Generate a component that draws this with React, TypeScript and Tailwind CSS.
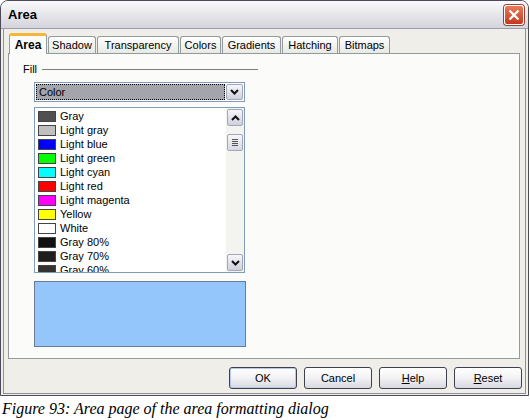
import React from 'react'

const UI = "font-['Liberation_Sans',Arial,sans-serif]"

const TABS = [
  { label: 'Area', w: 'w-[38px]', active: true },
  { label: 'Shadow', w: 'w-[48px]' },
  { label: 'Transparency', w: 'w-[82px]' },
  { label: 'Colors', w: 'w-[41px]' },
  { label: 'Gradients', w: 'w-[59px]' },
  { label: 'Hatching', w: 'w-[56px]' },
  { label: 'Bitmaps', w: 'w-[51px]' },
]

const COLORS = [
  { name: 'Gray', c: 'bg-[#505050]' },
  { name: 'Light gray', c: 'bg-[#c0c0c0]' },
  { name: 'Light blue', c: 'bg-[#0000ff]' },
  { name: 'Light green', c: 'bg-[#00ff00]' },
  { name: 'Light cyan', c: 'bg-[#00ffff]' },
  { name: 'Light red', c: 'bg-[#ff0000]' },
  { name: 'Light magenta', c: 'bg-[#ff00ff]' },
  { name: 'Yellow', c: 'bg-[#ffff00]' },
  { name: 'White', c: 'bg-[#ffffff]' },
  { name: 'Gray 80%', c: 'bg-[#111111]' },
  { name: 'Gray 70%', c: 'bg-[#1f1f1f]' },
  { name: 'Gray 60%', c: 'bg-[#333333]' },
]

function Chevron({ up }: { up?: boolean }) {
  return (
    <svg width="9" height="6" viewBox="0 0 9 6" aria-hidden="true">
      <path
        d={up ? 'M1 5 L4.5 1.5 L8 5' : 'M1 1 L4.5 4.5 L8 1'}
        fill="none" stroke="#111" strokeWidth="2"
      />
    </svg>
  )
}

function ScrollBtn({ up }: { up?: boolean }) {
  return (
    <div className="w-[16px] h-[17px] rounded-[2px] border border-[#a2a6bc] bg-gradient-to-b from-[#f6f6fa] to-[#cfd0dc] flex items-center justify-center">
      <Chevron up={up} />
    </div>
  )
}

function DlgButton({ children, def }: { children: React.ReactNode; def?: boolean }) {
  return (
    <button
      className={`w-[68px] h-[22px] rounded-[3px] border border-[#3e4250] text-[11px] text-black
        bg-gradient-to-b from-[#ffffff] via-[#f2f2f4] to-[#d8d8e0]
        ${def ? 'shadow-[inset_0_0_0_1px_#b8c8e8]' : ''}`}
    >
      {children}
    </button>
  )
}

export default function App() {
  return (
    <div className={`w-[530px] h-[420px] bg-white ${UI} text-[11px] text-black`}>
      {/* Window */}
      <div className="w-[529px] h-[396px] flex flex-col border border-[#4a4a58] rounded-t-[8px] overflow-hidden bg-[#efeee8]">
        {/* Title bar */}
        <div className="h-[28px] shrink-0 flex items-center justify-between pl-[7px] pr-[4px] bg-gradient-to-b from-[#fbfbfc] via-[#e6e6ea] to-[#d4d4dc] border-b border-[#9c9cac]">
          <span className="text-[13px] font-bold">Area</span>
          <div className="w-[20px] h-[20px] rounded-[3px] border border-white bg-gradient-to-b from-[#e87a5a] to-[#c4361c] flex items-center justify-center shadow-[0_0_0_1px_#a04030]">
            <svg width="12" height="12" viewBox="0 0 12 12" aria-hidden="true">
              <path d="M1.5 1.5 L10.5 10.5 M10.5 1.5 L1.5 10.5" stroke="white" strokeWidth="2.2" />
            </svg>
          </div>
        </div>

        {/* Body */}
        <div className="flex-1 px-[2px] pb-px">
          <div className="h-full border-x border-b border-[#8e8e98] flex flex-col">
            {/* Tabs */}
            <div className="h-[25px] shrink-0 flex items-end gap-px pl-[5px] relative z-10 -mb-px">
              {TABS.map(t =>
                t.active ? (
                  <div
                    key={t.label}
                    className={`${t.w} h-[21px] bg-[#fbfbf9] border-x border-[#919b9c] border-t-[3px] border-t-[#f6b63c] rounded-t-[3px] flex items-center justify-center font-bold text-[12px]`}
                  >
                    {t.label}
                  </div>
                ) : (
                  <div
                    key={t.label}
                    className={`${t.w} h-[17px] mb-px bg-gradient-to-b from-[#ffffff] to-[#e8e8e4] border border-b-0 border-[#919b9c] rounded-t-[3px] flex items-center justify-center`}
                  >
                    {t.label}
                  </div>
                )
              )}
            </div>

            {/* Tab page */}
            <div className="ml-[4px] w-[512px] h-[306px] shrink-0 border border-[#919b9c] bg-[#fbfbf9] pl-[14px] pt-[9px]">
              <div className="w-[235px] h-[13px] flex items-center">
                <span>Fill</span>
                <div className="flex-1 ml-[5px] h-px bg-[#7d7d7d]" />
              </div>

              <div className="ml-[11px]">
                {/* Dropdown */}
                <div className="mt-[6px] w-[211px] h-[20px] border border-[#7f9db9] bg-white p-px flex">
                  <div className="flex-1 bg-[#a4a4ac] border border-dotted border-black flex items-center pl-[2px]">
                    Color
                  </div>
                  <div className="w-[17px] ml-px rounded-[2px] border border-[#a2a6bc] bg-gradient-to-b from-[#f6f6fa] to-[#cfd0dc] flex items-center justify-center">
                    <Chevron />
                  </div>
                </div>

                {/* Colour list */}
                <div className="mt-[5px] w-[211px] h-[166px] border border-[#7f9db9] bg-white flex">
                  <div className="flex-1 overflow-hidden pt-px">
                    {COLORS.map(c => (
                      <div key={c.name} className="h-[14px] flex items-center">
                        <span className={`ml-[3px] w-[18px] h-[11px] border border-[#444] ${c.c}`} />
                        <span className="ml-[4px] leading-none">{c.name}</span>
                      </div>
                    ))}
                  </div>
                  <div className="w-[18px] bg-[#f3f3ef] flex flex-col py-px pr-px items-end">
                    <ScrollBtn up />
                    <div className="mt-[8px] w-[16px] h-[17px] rounded-[2px] border border-[#a2a6bc] bg-gradient-to-b from-[#f6f6fa] to-[#d8d8e2] flex flex-col items-center justify-center gap-px">
                      <span className="w-[6px] h-px bg-[#555]" />
                      <span className="w-[6px] h-px bg-[#555]" />
                      <span className="w-[6px] h-px bg-[#555]" />
                      <span className="w-[6px] h-px bg-[#555]" />
                    </div>
                    <div className="flex-1" />
                    <ScrollBtn />
                  </div>
                </div>

                {/* Preview */}
                <div className="mt-[8px] w-[212px] h-[66px] border border-[#6b7b94] bg-[#94c6fc]" />
              </div>
            </div>

            {/* Buttons */}
            <div className="mt-[8px] flex justify-end gap-[7px] pr-[3px]">
              <DlgButton def>OK</DlgButton>
              <DlgButton>Cancel</DlgButton>
              <DlgButton><u>H</u>elp</DlgButton>
              <DlgButton><u>R</u>eset</DlgButton>
            </div>
          </div>
        </div>
      </div>

      {/* Caption */}
      <p className="mt-[4px] pl-[2px] font-['Liberation_Serif',serif] italic text-[16px] leading-[18px]">
        Figure 93: Area page of the area formatting dialog
      </p>
    </div>
  )
}
